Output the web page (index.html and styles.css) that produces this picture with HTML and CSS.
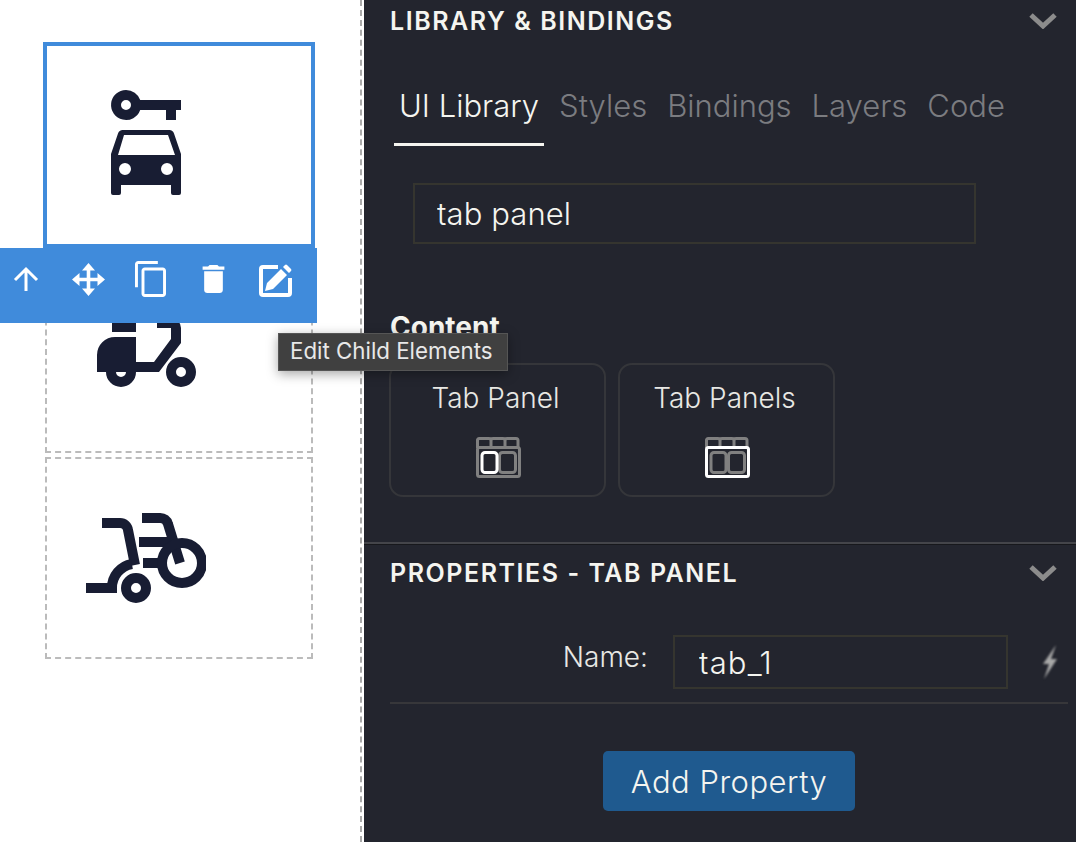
FILE: index.html
```html
<!DOCTYPE html>
<html lang="en">
<head>
    <meta charset="UTF-8">
    <title>Library &amp; Bindings</title>
    <link rel="stylesheet" href="styles.css">
</head>
<body>
    <div class="page">
        <!-- Canvas -->
        <div class="canvas">
            <div class="cell selected">
                <svg class="cell-icon" viewBox="0 0 120 120">
                    <path fill-rule="evenodd" d="M40 5a15 15 0 0 1 14.2 10H95V25H90V35H80V25H54.2A15 15 0 1 1 40 5ZM40 15a5 5 0 1 0 0 10a5 5 0 0 0 0-10Z"/>
                    <path fill-rule="evenodd" d="M37 45H83a5 5 0 0 1 5 3.5L95 69V108a2 2 0 0 1-2 2H87a2 2 0 0 1-2-2V100H35v8a2 2 0 0 1-2 2H27a2 2 0 0 1-2-2V69L32 48.5A5 5 0 0 1 37 45ZM38 50L32 70H89L82 50ZM39 78a6 6 0 1 0 0 12a6 6 0 0 0 0-12ZM81 78a6 6 0 1 0 0 12a6 6 0 0 0 0-12Z"/>
                </svg>
            </div>
            <div class="cell">
                <svg class="cell-icon" viewBox="0 0 120 120">
                    <path d="M26 21H50V41H26Z"/>
                    <path d="M71 27H85a10 10 0 0 1 10 10V52L73 81H11V64a18 18 0 0 1 18-18H50V71H68L85 48V37H71Z"/>
                    <path fill-rule="evenodd" d="M20 81a15 15 0 0 0 30 0ZM30 81a5 5 0 0 0 10 0Z"/>
                    <path fill-rule="evenodd" d="M95 66a15 15 0 1 0 0 30a15 15 0 0 0 0-30ZM95 76a5 5 0 1 1 0 10a5 5 0 0 1 0-10Z"/>
                </svg>
            </div>
            <div class="cell">
                <svg class="cell-icon" viewBox="0 0 120 120">
                    <g class="chair">
                        <path d="M16 26H34a8 8 0 0 1 8 7L49 68"/>
                        <path d="M0 91H31M26 91A24 24 0 0 1 46 67"/>
                        <path d="M56 21H74a8 8 0 0 1 8 6L94 66"/>
                        <path d="M53 45H85M57 66H78"/>
                        <circle cx="96" cy="66" r="20"/>
                    </g>
                    <path fill-rule="evenodd" d="M50 76a15 15 0 1 0 0 30a15 15 0 0 0 0-30ZM50 86a5 5 0 1 1 0 10a5 5 0 0 1 0-10Z"/>
                </svg>
            </div>

            <!-- Toolbar of the selected cell -->
            <div class="toolbar">
                <svg class="tool tool-up" viewBox="0 0 26 26"><path d="M13 25V3M2 14L13 3L24 14"/></svg>
                <svg class="tool tool-move" viewBox="0 0 33 33">
                    <path d="M16.500 0L23 7.500H10ZM16.500 33L23 25.500H10ZM0 16.500L7.500 10V23ZM33 16.500L25.500 10V23Z"/>
                    <path d="M14.700 7H18.300V14.700H26V18.300H18.300V26H14.700V18.300H7V14.700H14.700Z"/>
                </svg>
                <svg class="tool tool-copy" viewBox="2 1 19 22"><path d="M16 1H4c-1.1 0-2 .9-2 2v14h1.800V2.800H16V1zm3 4H8c-1.100 0-2 .9-2 2v14c0 1.100.9 2 2 2h11c1.100 0 2-.9 2-2V7c0-1.100-.9-2-2-2zm.2 16.200H7.800V6.800h11.400v14.400z"/></svg>
                <svg class="tool tool-trash" viewBox="5 3 14 18"><path d="M6 19c0 1.100.9 2 2 2h8c1.100 0 2-.9 2-2V7H6v12zM19 4h-3.500l-1-1h-5l-1 1H5v2h14V4z"/></svg>
                <svg class="tool tool-edit" viewBox="0 0 33 33">
                    <path class="edit-box" d="M19 3H4a2 2 0 0 0-2 2V29a2 2 0 0 0 2 2H29a2 2 0 0 0 2-2V14"/>
                    <path d="M6 27L8 19L22 5L28 11L14 25ZM24 3L26 1a1.500 1.500 0 0 1 2 0L32 5a1.500 1.500 0 0 1 0 2L30 9Z"/>
                </svg>
            </div>
            <div class="tooltip">Edit Child Elements</div>
        </div>

        <!-- Right panel -->
        <div class="panel">
            <div class="section-head first">
                <span>LIBRARY &amp; BINDINGS</span>
                <svg class="chevron" viewBox="0 0 28 16"><path d="M2 2L14 13L26 2"/></svg>
            </div>

            <div class="tabs">
                <div class="tab active">UI Library</div>
                <div class="tab">Styles</div>
                <div class="tab">Bindings</div>
                <div class="tab">Layers</div>
                <div class="tab">Code</div>
            </div>

            <input class="search" type="text" value="tab panel">

            <h3 class="group-title">Content</h3>
            <div class="cards">
                <div class="card">
                    <div class="card-label">Tab Panel</div>
                    <svg class="tab-icon" viewBox="0 0 45 41">
                        <path d="M1.500 11V4a2 2 0 0 1 2-2.500H13a2 2 0 0 1 2 2V11M15 11V3.500a2 2 0 0 1 2-2H27a2 2 0 0 1 2 2V11M29 11V3.500a2 2 0 0 1 2-2H40a2 2 0 0 1 2 2V10"/>
                        <rect x="1.500" y="10.500" width="42" height="29" rx="2"/>
                        <rect x="23.500" y="15.500" width="16" height="20" rx="3"/>
                        <rect class="on" x="6" y="15.500" width="15" height="20" rx="3"/>
                    </svg>
                </div>
                <div class="card">
                    <div class="card-label">Tab Panels</div>
                    <svg class="tab-icon" viewBox="0 0 45 41">
                        <path d="M1.500 11V4a2 2 0 0 1 2-2.500H13a2 2 0 0 1 2 2V11M15 11V3.500a2 2 0 0 1 2-2H27a2 2 0 0 1 2 2V11M29 11V3.500a2 2 0 0 1 2-2H40a2 2 0 0 1 2 2V10"/>
                        <rect x="6" y="15.500" width="15" height="20" rx="3"/>
                        <rect x="23.500" y="15.500" width="16" height="20" rx="3"/>
                        <rect class="on" x="1.500" y="10.500" width="42" height="29" rx="2"/>
                    </svg>
                </div>
            </div>

            <div class="section-head second">
                <span>PROPERTIES - TAB PANEL</span>
                <svg class="chevron" viewBox="0 0 28 16"><path d="M2 2L14 13L26 2"/></svg>
            </div>

            <div class="prop-row">
                <label class="prop-label" for="tabName">Name:</label>
                <input class="prop-input" id="tabName" type="text" value="tab_1">
                <svg class="bolt" viewBox="0 0 18 36"><path d="M15 1L2 20H8L3 35L16 15H10Z"/></svg>
            </div>

            <div class="add-row">
                <button class="add-btn">Add Property</button>
            </div>
        </div>
    </div>
</body>
</html>
```

FILE: styles.css
```css
html, body {
    margin: 0;
    padding: 0;
    height: 100%;
    background-color: #fff;
    font-family: "Inter", "Liberation Sans", sans-serif;
}
.page {
    display: flex;
    height: 842px;
    overflow: hidden;
}

/* Canvas */
.canvas {
    position: relative;
    box-sizing: border-box;
    width: 362px;
    margin-right: 2px;
    padding: 44px 0 0 45px;
    border-right: 2px dashed #aaa;
    flex-shrink: 0;
    display: flex;
    flex-direction: column;
    gap: 4px;
}
.cell {
    box-sizing: border-box;
    width: 268px;
    height: 202px;
    border: 2px dashed #bbb;
    display: flex;
    align-items: center;
}
.cell.selected {
    border: none;
    outline: 4px solid #408bdb;
    outline-offset: -2px;
    margin-bottom: 1px;
}
.cell.selected .cell-icon {
    margin-left: 41px;
    margin-bottom: 0;
}
.cell-icon {
    width: 120px;
    height: 120px;
    margin-left: 39px;
    margin-bottom: 2px;
    fill: #181d33;
    flex-shrink: 0;
}
.chair {
    fill: none;
    stroke: #181d33;
    stroke-width: 10;
}
.toolbar {
    position: absolute;
    left: 0;
    top: 248px;
    width: 317px;
    height: 75px;
    background-color: #408bdb;
}
.tool {
    position: absolute;
    fill: #fff;
}
.tool-up {
    left: 13px;
    top: 18px;
    width: 26px;
    height: 26px;
    fill: none;
    stroke: #fff;
    stroke-width: 3;
}
.tool-move {
    left: 72px;
    top: 15px;
    width: 33px;
    height: 33px;
}
.tool-copy {
    left: 135px;
    top: 13px;
    width: 31px;
    height: 36px;
}
.tool-trash {
    left: 202px;
    top: 17px;
    width: 23px;
    height: 28px;
}
.tool-edit {
    left: 259px;
    top: 16px;
    width: 33px;
    height: 33px;
}
.edit-box {
    fill: none;
    stroke: #fff;
    stroke-width: 4;
}
.tooltip {
    position: absolute;
    left: 278px;
    top: 333px;
    box-sizing: border-box;
    width: 230px;
    height: 38px;
    line-height: 34px;
    padding-left: 11px;
    font-size: 22.3px;
    color: #e8e8e8;
    white-space: nowrap;
    background-color: #404040;
    border: 1px solid #555;
    box-shadow: 0 3px 12px rgba(0, 0, 0, 0.35);
    z-index: 5;
}

/* Right panel */
.panel {
    flex: 1;
    background-color: #23252e;
    color: #f5f5f0;
    padding-left: 26px;
    padding-right: 8px;
}
.section-head {
    display: flex;
    justify-content: space-between;
    align-items: center;
    font-size: 25px;
    font-weight: 600;
    letter-spacing: 1.55px;
    padding-right: 11px;
}
.section-head.first {
    height: 42px;
}
.section-head.second {
    height: 58px;
    margin-left: -26px;
    margin-right: -8px;
    padding-left: 26px;
    padding-right: 19px;
    border-top: 2px solid #44454a;
    box-shadow: inset 0 1px 0 #17181c;
    margin-top: 45px;
}
.chevron {
    width: 28px;
    height: 16px;
    fill: none;
    stroke: #8c8c8c;
    stroke-width: 5;
}
.tabs {
    display: flex;
    gap: 10px;
    margin-top: 42px;
    padding-left: 4px;
}
.tab {
    padding: 0 5px;
    height: 62px;
    line-height: 44px;
    box-sizing: border-box;
    font-size: 31px;
    font-weight: 350;
    color: #7b7c80;
    white-space: nowrap;
}
.tab.active {
    color: #f5f5f0;
    border-bottom: 3px solid #f5f5f0;
}
.search {
    display: block;
    box-sizing: border-box;
    width: 563px;
    height: 61px;
    margin: 37px 0 0 23px;
    padding: 0 22px;
    border: 2px solid #35352f;
    background: transparent;
    color: #f5f5f0;
    font-family: inherit;
    font-size: 31px;
    font-weight: 350;
    letter-spacing: 0.1px;
}
.group-title {
    margin: 65px 0 0 0;
    height: 54px;
    line-height: 36px;
    font-size: 28px;
    font-weight: 700;
}
.cards {
    display: flex;
    gap: 12px;
    margin-left: -1px;
}
.card {
    box-sizing: border-box;
    width: 217px;
    height: 134px;
    border: 2px solid #35363a;
    border-radius: 14px;
    display: flex;
    flex-direction: column;
    align-items: center;
    padding-top: 16px;
}
.card-label {
    margin-right: 4px;
    font-size: 28px;
    font-weight: 350;
    line-height: 34px;
    color: #e8e8e4;
}
.tab-icon {
    width: 45px;
    height: 41px;
    margin-top: 22px;
    margin-left: 2px;
    fill: none;
    stroke: #808080;
    stroke-width: 3;
}
.tab-icon .on {
    stroke: #fff;
}
.prop-row {
    display: flex;
    align-items: center;
    height: 102px;
    border-bottom: 2px solid #37373a;
    box-sizing: border-box;
    padding-top: 20px;
}
.prop-label {
    width: 258px;
    text-align: right;
    font-size: 28px;
    font-weight: 350;
    color: #e8e8e4;
    padding-bottom: 10px;
}
.prop-input {
    box-sizing: border-box;
    width: 335px;
    height: 54px;
    margin-left: 25px;
    padding: 0 24px;
    border: 2px solid #35352f;
    background: transparent;
    color: #f5f5f0;
    font-family: inherit;
    font-size: 31px;
    font-weight: 350;
    letter-spacing: 1.2px;
}
.bolt {
    width: 18px;
    height: 36px;
    margin-left: 33px;
    fill: #a8a8a8;
    filter: blur(1px);
}
.add-row {
    display: flex;
    justify-content: center;
    padding-top: 47px;
}
.add-btn {
    width: 252px;
    height: 60px;
    border: none;
    border-radius: 5px;
    background-color: #1f5a8f;
    color: #f5f5f0;
    font-family: inherit;
    font-size: 31px;
    font-weight: 350;
    letter-spacing: 0.5px;
}
```
